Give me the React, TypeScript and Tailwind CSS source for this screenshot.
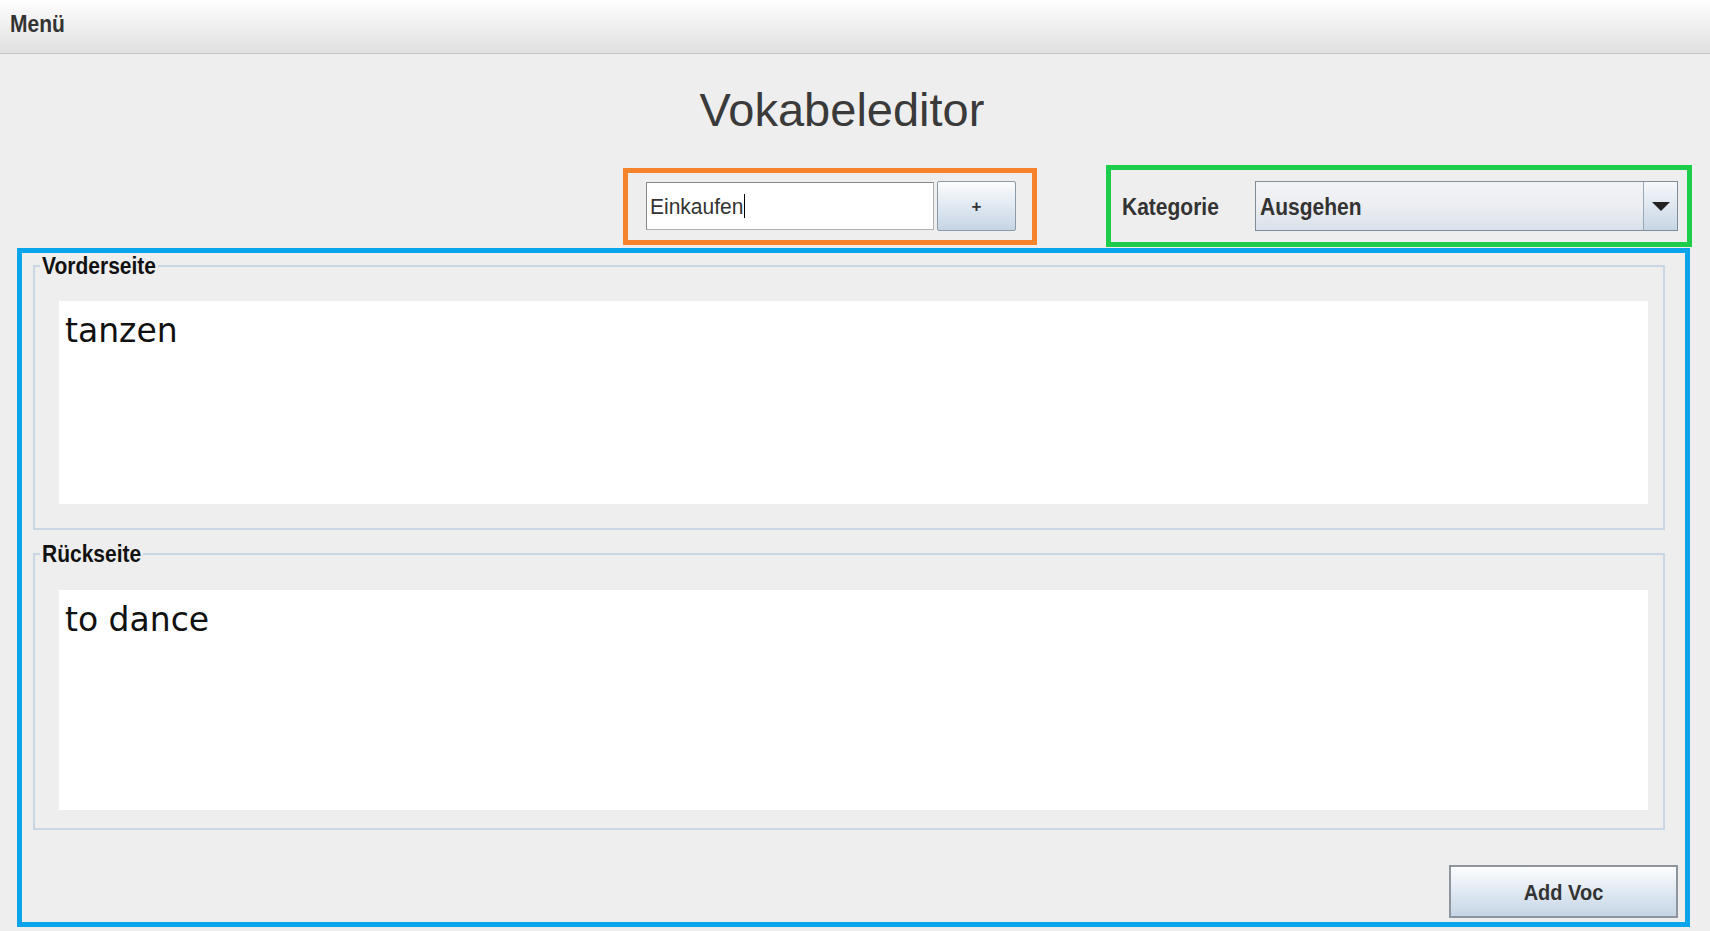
export default function App() {
  return (
    <div className="w-[1710px] h-[931px] bg-[#eeeeee] overflow-hidden flex flex-col font-['Liberation_Sans',Arial,sans-serif]">
      {/* Menu bar */}
      <div className="h-[54px] shrink-0 bg-gradient-to-b from-[#fefefe] to-[#e0e0e0] border-b border-[#c4c4c4] pl-[10px] pt-[12px]">
        <span className="inline-block text-[21px] leading-none font-bold text-[#333333] scale-y-[1.1] origin-top">
          Menü
        </span>
      </div>

      <div className="w-[1692px] flex flex-col">
        {/* Title */}
        <h1 className="mt-[32px] w-[1684px] text-center text-[47px] leading-none text-[#3a3a3a]">
          Vokabeleditor
        </h1>

        {/* Category row */}
        <div className="mt-[32px] flex items-center h-[82px]">
          <div className="ml-[623px] w-[414px] h-[77px] border-[5px] border-[#f5832c] flex items-center pl-[18px] gap-[3px]">
            <div className="w-[288px] h-[48px] bg-white border border-[#888888] border-r-[#b0b0b0] border-b-[#b0b0b0] flex items-center pl-[3px]">
              <span className="inline-block text-[21px] leading-none text-[#333333] scale-y-[1.05]">Einkaufen</span>
              <span className="w-[1px] h-[24px] bg-black ml-[1px]" />
            </div>
            <button className="w-[79px] h-[50px] bg-gradient-to-b from-[#fbfcfd] to-[#c6d5e5] border border-[#8d9aa8] rounded-[2px] text-[17px] font-bold text-[#333333] leading-none">
              +
            </button>
          </div>

          <div className="ml-[69px] w-[586px] h-[82px] border-[5px] border-[#1ccd4b] flex items-center pl-[11px]">
            <span className="w-[133px] shrink-0 inline-block text-[21px] font-bold text-[#333333] leading-none scale-y-[1.1] origin-left">
              Kategorie
            </span>
            <div className="w-[423px] h-[50px] flex bg-gradient-to-b from-[#f1f3f6] via-[#eceef1] to-[#d9e1ea] border border-[#7f8c9a]">
              <div className="flex-1 flex items-center pl-[4px]">
                <span className="inline-block text-[21px] font-bold text-[#333333] leading-none scale-y-[1.1]">
                  Ausgehen
                </span>
              </div>
              <div className="w-[34px] border-l border-[#9aa7b5] bg-gradient-to-b from-[#f6f8fb] to-[#c8d6e5] flex items-center justify-center">
                <svg width="18" height="9" viewBox="0 0 18 9">
                  <path d="M0 0 H18 L9 9 Z" fill="#222222" />
                </svg>
              </div>
            </div>
          </div>
        </div>

        {/* Editor panel */}
        <div className="mt-[1px] ml-[17px] w-[1673px] h-[679px] border-[5px] border-[#0aa4ea] flex flex-col pl-[11px] pr-[20px] pt-[2px]">
          <fieldset className="border-2 border-[#c8d6e5]">
            <legend className="ml-[5px] px-[2px] text-[21px] leading-[22px] font-bold text-[#111111]">
              <span className="inline-block scale-y-[1.1]">Vorderseite</span>
            </legend>
            <div className="pl-[24px] pr-[15px] pt-[24px] pb-[24px]">
              <div className="h-[203px] bg-white pl-[6px] pt-[13px]">
                <span className="font-['DejaVu_Sans',sans-serif] text-[33px] leading-none text-[#111111]">tanzen</span>
              </div>
            </div>
          </fieldset>

          <fieldset className="mt-[13px] border-2 border-[#c8d6e5]">
            <legend className="ml-[5px] px-[2px] text-[21px] leading-[22px] font-bold text-[#111111]">
              <span className="inline-block scale-y-[1.1]">Rückseite</span>
            </legend>
            <div className="pl-[24px] pr-[15px] pt-[25px] pb-[18px]">
              <div className="h-[220px] bg-white pl-[6px] pt-[13px]">
                <span className="font-['DejaVu_Sans',sans-serif] text-[33px] leading-none text-[#111111]">to dance</span>
              </div>
            </div>
          </fieldset>

          <div className="mt-[35px] flex justify-end -mr-[13px]">
            <button className="w-[229px] h-[53px] bg-gradient-to-b from-[#fcfdfe] to-[#c5d5e6] border-2 border-[#8e959c] text-[20px] font-bold text-[#333333] leading-none">
              <span className="inline-block scale-y-[1.1]">Add Voc</span>
            </button>
          </div>
        </div>
      </div>
    </div>
  );
}
